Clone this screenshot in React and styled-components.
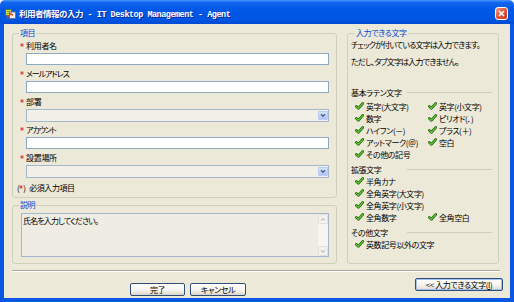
import React from 'react';
import styled, { createGlobalStyle } from 'styled-components';

const JP = `"Noto Sans CJK JP", "Noto Sans CJK SC", sans-serif`;

const GlobalStyle = createGlobalStyle`
  html, body { margin: 0; padding: 0; background: #ffffff; }
  body { font-family: ${JP}; }
  *, *::before, *::after { box-sizing: border-box; }
`;

const Window = styled.div`
  width: 514px;
  height: 302px;
  display: flex;
  flex-direction: column;
  border-radius: 5px 5px 0 0;
  overflow: hidden;
  font-family: ${JP};
  font-size: 8px;
  letter-spacing: -0.4px;
  color: #000;
  font-feature-settings: "palt" 1;
`;

const TitleBar = styled.div`
  height: 24px;
  flex: none;
  display: flex;
  align-items: center;
  padding: 2px 6px 0 5px;
  background: linear-gradient(
    to bottom,
    #4a97fa 0%,
    #1366ee 10%,
    #0058e6 40%,
    #0056e3 80%,
    #004bd2 100%
  );
`;

const TitleIcon = styled.svg`
  flex: none;
  width: 11px;
  height: 11px;
  margin-right: 3px;
`;

const TitleText = styled.span`
  font-family: "Liberation Mono", "Noto Sans CJK JP", monospace;
  font-weight: bold;
  font-size: 8.5px;
  letter-spacing: -0.5px;
  color: #ffffff;
  text-shadow: 1px 1px 0 #0a2a9c;
  white-space: nowrap;
  font-feature-settings: normal;
`;

const CloseButton = styled.div`
  margin-left: auto;
  width: 13px;
  height: 13px;
  border: 1px solid #ffffff;
  border-radius: 3px;
  background: linear-gradient(135deg, #f0a189 0%, #e2583b 45%, #c8391c 100%);
  display: flex;
  align-items: center;
  justify-content: center;
`;

const Body = styled.div`
  flex: 1;
  display: flex;
  flex-direction: column;
  background: #ece9d8;
  border: 4px solid #0b57e3;
  border-top: 0;
  padding-top: 4px;
`;

const MainRow = styled.div`
  display: flex;
  gap: 10px;
  height: 236px;
  padding: 0 11px 0 8px;
`;

const LeftCol = styled.div`
  width: 325px;
  flex: none;
  display: flex;
  flex-direction: column;
  gap: 2px;
`;

const Group = styled.fieldset`
  margin: 0;
  padding: 0;
  min-width: 0;
  border: 1px solid #d0d0bf;
  border-radius: 3px;
  flex: ${(p) => (p.$grow ? '1' : 'none')};
  width: ${(p) => (p.$width ? `${p.$width}px` : 'auto')};
`;

const Legend = styled.legend`
  margin-left: ${(p) => p.$offset}px;
  padding: 0 1px;
  color: #0046d5;
  font-size: 8px;
  line-height: 10px;
`;

const FieldsBody = styled.div`
  padding: 1.5px 7px 4.5px 7px;
`;

const Field = styled.div`
  display: flex;
  flex-direction: column;
  margin-bottom: ${(p) => p.$gap}px;
`;

const FieldLabel = styled.div`
  display: flex;
  align-items: center;
  height: 11px;
  line-height: 11px;
  white-space: nowrap;
  letter-spacing: ${(p) => (p.$kana ? '-1.1px' : '-0.3px')};
`;

const StarBox = styled.span`
  width: 6px;
  flex: none;
  display: flex;
  align-items: center;
`;

const TextInput = styled.input`
  appearance: none;
  display: block;
  margin: 2px 0 0 6px;
  height: 12px;
  padding: 0 2px;
  border: 1px solid #8fa8c4;
  background: #ffffff;
  font: inherit;
  outline: none;
`;

const Combo = styled.div`
  margin: 2px 0 0 6px;
  height: 13px;
  border: 1px solid #a3b7cf;
  background: #f1efe6;
  display: flex;
  justify-content: flex-end;
  padding: 1px 0 1px 0;
`;

const DropButton = styled.div`
  width: 10px;
  height: 100%;
  border: 1px solid #b9cbf3;
  border-radius: 1px;
  background: linear-gradient(to bottom, #d6e2fc 0%, #bfd1f8 60%, #afc5f4 100%);
  display: flex;
  align-items: center;
  justify-content: center;
`;

const Note = styled.div`
  display: flex;
  align-items: center;
  height: 11px;
  margin: 4px 0 0 -3px;
  white-space: nowrap;
`;

const NoteMark = styled.span`
  display: flex;
  align-items: center;
  margin-right: 3.5px;
`;

const DescBody = styled.div`
  padding: 3px 7px 0 8px;
`;

const DescBox = styled.div`
  height: 44px;
  border: 1px solid #a3b7cf;
  background: #efede3;
  display: flex;
  padding: 0 0 0 1px;
`;

const DescText = styled.div`
  flex: 1;
  line-height: 11px;
  padding-top: 0.5px;
  letter-spacing: -0.85px;
`;

const ScrollBar = styled.div`
  width: 10px;
  flex: none;
  margin-left: auto;
  display: flex;
  flex-direction: column;
  justify-content: space-between;
  background: #f6f5ef;
`;

const ScrollBtn = styled.div`
  width: 10px;
  height: 10px;
  border: 1px solid #e3e1d6;
  border-radius: 1px;
  background: #f4f3ec;
  display: flex;
  align-items: center;
  justify-content: center;
`;

const RightBody = styled.div`
  padding: 1px 6px 0 3px;
`;

const Para = styled.p`
  margin: ${(p) => p.$top}px 0 0 0;
  line-height: 12px;
  white-space: nowrap;
  letter-spacing: -0.8px;
`;

const SectionHead = styled.div`
  display: flex;
  align-items: center;
  height: 11px;
  line-height: 11px;
  margin-top: ${(p) => p.$top}px;
  margin-bottom: ${(p) => p.$bottom || 0}px;
`;

const SectionTitle = styled.span`
  width: 56px;
  flex: none;
  white-space: nowrap;
`;

const SectionRule = styled.span`
  flex: 1;
  height: 0;
  border-top: 1px solid #cfcdbd;
`;

const ItemGrid = styled.div`
  display: grid;
  grid-template-columns: 73px 1fr;
  grid-auto-rows: 12px;
  padding-left: 4px;
`;

const Item = styled.div`
  display: flex;
  align-items: center;
  gap: 2px;
  white-space: nowrap;
  grid-column: ${(p) => (p.$wide ? '1 / -1' : 'auto')};
`;

const Separator = styled.div`
  margin: 6px 10px 0 8px;
  height: 2px;
  border-top: 1px solid #aca899;
  border-bottom: 1px solid #ffffff;
`;

const ButtonRow = styled.div`
  display: flex;
  align-items: flex-start;
  margin-top: 6px;
  padding-right: 7px;
`;

const LeftButtons = styled.div`
  display: flex;
  gap: 5px;
  margin-left: 126px;
  padding-top: 5px;
`;

const Button = styled.button`
  width: ${(p) => p.$w}px;
  height: 13px;
  padding: 0;
  margin: 0;
  font-family: ${JP};
  font-size: 8px;
  line-height: 11px;
  letter-spacing: -0.4px;
  color: #000;
  border: 1px solid #2f4f78;
  border-radius: 2px;
  background: linear-gradient(to bottom, #ffffff 0%, #f5f4ef 55%, #e2ded2 90%, #d4cfc2 100%);
  box-shadow: ${(p) => (p.$default ? 'inset 0 0 0 1px #a6c0ec' : 'none')};
  font-feature-settings: "palt" 1;
  white-space: nowrap;
`;

const RightButton = styled(Button)`
  margin-left: auto;
`;

const Star = () => (
  <svg width="4" height="4" viewBox="0 0 4 4">
    <path d="M2 0.2V3.8M0.4 1.1L3.6 2.9M0.4 2.9L3.6 1.1" stroke="#e0403a" strokeWidth="1" />
  </svg>
);

const Check = () => (
  <svg width="9" height="8" viewBox="0 0 9 8" style={{ flex: 'none' }}>
    <path d="M1.3 4.3L3.4 6.4L7.8 1.4" fill="none" stroke="#1f5c10" strokeWidth="2.6" strokeLinecap="round" strokeLinejoin="round" />
    <path d="M1.3 4.3L3.4 6.4L7.8 1.4" fill="none" stroke="#5bd02b" strokeWidth="1.2" strokeLinecap="round" strokeLinejoin="round" />
  </svg>
);

const Chevron = ({ color = '#4d6185' }) => (
  <svg width="6" height="5" viewBox="0 0 6 5">
    <path d="M1 1.3L3 3.3L5 1.3" fill="none" stroke={color} strokeWidth="1.4" />
  </svg>
);

const ChevronUp = () => (
  <svg width="6" height="5" viewBox="0 0 6 5">
    <path d="M1 3.5L3 1.5L5 3.5" fill="none" stroke="#c9c8bd" strokeWidth="1.2" />
  </svg>
);

const Combobox = () => (
  <Combo role="combobox">
    <DropButton>
      <Chevron />
    </DropButton>
  </Combo>
);

const basicItems = [
  '英字(大文字)', '英字(小文字)',
  '数字', 'ピリオド(．)',
  'ハイフン(－)', 'プラス(＋)',
  'アットマーク(＠)', '空白',
  'その他の記号',
];

export default function App() {
  return (
    <>
      <GlobalStyle />
      <Window>
        <TitleBar>
          <TitleIcon viewBox="0 0 11 11">
            <rect x="0.5" y="1.5" width="6" height="6" fill="#d8e64a" stroke="#4f6a1a" strokeWidth="0.8" />
            <path d="M1.5 3.5H5.5M1.5 5.5H5.5" stroke="#4f6a1a" strokeWidth="0.6" />
            <rect x="4.5" y="4" width="6" height="6.5" fill="#f3f3f3" stroke="#6b6b6b" strokeWidth="0.8" />
            <path d="M2 10L6 5.5L8 7.5" fill="none" stroke="#e0461f" strokeWidth="1.4" />
          </TitleIcon>
          <TitleText>利用者情報の入力 - IT Desktop Management - Agent</TitleText>
          <CloseButton aria-label="閉じる">
            <svg width="7" height="7" viewBox="0 0 7 7">
              <path d="M1 1L6 6M6 1L1 6" stroke="#ffffff" strokeWidth="1.5" />
            </svg>
          </CloseButton>
        </TitleBar>
        <Body>
          <MainRow>
            <LeftCol>
              <Group>
                <Legend $offset={6}>項目</Legend>
                <FieldsBody>
                  <Field $gap={3}>
                    <FieldLabel><StarBox><Star /></StarBox>利用者名</FieldLabel>
                    <TextInput readOnly />
                  </Field>
                  <Field $gap={3}>
                    <FieldLabel $kana><StarBox><Star /></StarBox>メールアドレス</FieldLabel>
                    <TextInput readOnly />
                  </Field>
                  <Field $gap={2}>
                    <FieldLabel><StarBox><Star /></StarBox>部署</FieldLabel>
                    <Combobox />
                  </Field>
                  <Field $gap={3}>
                    <FieldLabel $kana><StarBox><Star /></StarBox>アカウント</FieldLabel>
                    <TextInput readOnly />
                  </Field>
                  <Field $gap={0}>
                    <FieldLabel><StarBox><Star /></StarBox>設置場所</FieldLabel>
                    <Combobox />
                  </Field>
                  <Note>
                    <NoteMark>(<Star />)</NoteMark>必須入力項目
                  </Note>
                </FieldsBody>
              </Group>
              <Group $grow>
                <Legend $offset={6}>説明</Legend>
                <DescBody>
                  <DescBox>
                    <DescText>氏名を入力してください。</DescText>
                    <ScrollBar>
                      <ScrollBtn><ChevronUp /></ScrollBtn>
                      <ScrollBtn><Chevron color="#c9c8bd" /></ScrollBtn>
                    </ScrollBar>
                  </DescBox>
                </DescBody>
              </Group>
            </LeftCol>
            <Group $width={152}>
              <Legend $offset={7}>入力できる文字</Legend>
              <RightBody>
                <Para $top={0}>チェックが付いている文字は入力できます。</Para>
                <Para $top={5}>ただし、タブ文字は入力できません。</Para>
                <SectionHead $top={19} $bottom={2}>
                  <SectionTitle>基本ラテン文字</SectionTitle>
                  <SectionRule />
                </SectionHead>
                <ItemGrid>
                  {basicItems.map((t) => (
                    <Item key={t}><Check />{t}</Item>
                  ))}
                </ItemGrid>
                <SectionHead $top={4}>
                  <SectionTitle>拡張文字</SectionTitle>
                  <SectionRule />
                </SectionHead>
                <ItemGrid>
                  <Item $wide><Check />半角カナ</Item>
                  <Item $wide><Check />全角英字(大文字)</Item>
                  <Item $wide><Check />全角英字(小文字)</Item>
                  <Item><Check />全角数字</Item>
                  <Item><Check />全角空白</Item>
                </ItemGrid>
                <SectionHead $top={4}>
                  <SectionTitle>その他文字</SectionTitle>
                  <SectionRule />
                </SectionHead>
                <ItemGrid>
                  <Item $wide><Check />英数記号以外の文字</Item>
                </ItemGrid>
              </RightBody>
            </Group>
          </MainRow>
          <Separator />
          <ButtonRow>
            <LeftButtons>
              <Button $w={55}>完了</Button>
              <Button $w={56}>キャンセル</Button>
            </LeftButtons>
            <RightButton $w={88} $default>&lt;&lt; 入力できる文字(<u>I</u>)</RightButton>
          </ButtonRow>
        </Body>
      </Window>
    </>
  );
}
